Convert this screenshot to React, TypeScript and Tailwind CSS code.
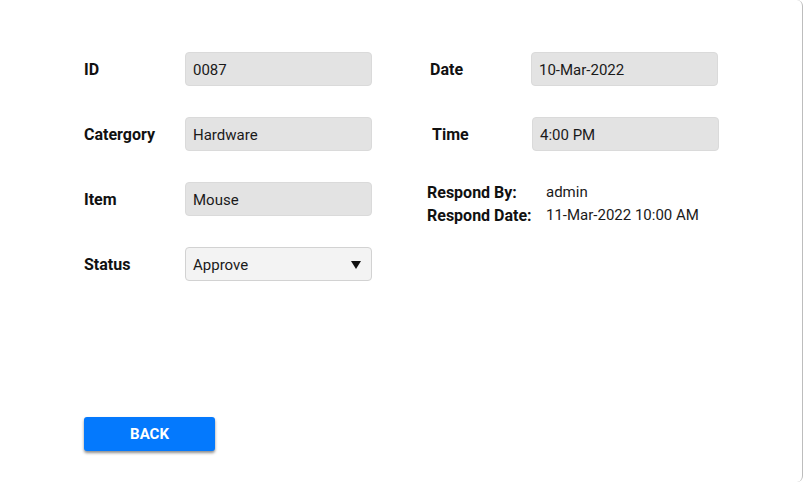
const Field = ({ value }: { value: string }) => (
  <div className="flex h-[34px] w-[187px] items-center rounded-[4px] border border-[#dadada] bg-[#e3e3e3] px-[7px] pt-[2px] text-[15px] text-[#1a1a1a]">
    {value}
  </div>
);

const Label = ({ text, className = "" }: { text: string; className?: string }) => (
  <div className={`pt-[2px] text-[16px] font-bold text-[#111] ${className}`}>{text}</div>
);

export default function App() {
  return (
    <div
      className="relative h-[482px] w-[803px] rounded-r-[6px] border-r border-[#bdbdbd] bg-white"
      style={{ fontFamily: "Roboto, 'Liberation Sans', sans-serif" }}
    >
      <div className="flex gap-[55px] pl-[84px] pt-[52px]">
        <div className="flex flex-col gap-[31px]">
          {[
            ["ID", "0087"],
            ["Catergory", "Hardware"],
            ["Item", "Mouse"],
          ].map(([label, value]) => (
            <div key={label} className="grid grid-cols-[101px_187px] items-center">
              <Label text={label} />
              <Field value={value} />
            </div>
          ))}
          <div className="grid grid-cols-[101px_187px] items-center">
            <Label text="Status" />
            <div className="flex h-[34px] w-[187px] items-center justify-between rounded-[4px] border border-[#d2d2d2] bg-[#f3f3f3] pl-[7px] pr-[10px] pt-[2px] text-[15px] text-[#1a1a1a]">
              <span>Approve</span>
              <svg width="10" height="8" viewBox="0 0 10 8">
                <path d="M0 0 H10 L5 8 Z" fill="#111" />
              </svg>
            </div>
          </div>
        </div>
        <div className="flex flex-col">
          <div className="grid grid-cols-[104px_187px] items-center">
            <Label text="Date" className="pl-[3px]" />
            <Field value="10-Mar-2022" />
          </div>
          <div className="mt-[31px] grid grid-cols-[105px_187px] items-center">
            <Label text="Time" className="pl-[5px]" />
            <Field value="4:00 PM" />
          </div>
          <div className="mt-[30px] grid grid-cols-[119px_1fr] leading-[23px]">
            <div className="text-[16px] font-bold text-[#111]">Respond By:</div>
            <div className="text-[15px] text-[#1a1a1a]">admin</div>
            <div className="text-[16px] font-bold text-[#111]">Respond Date:</div>
            <div className="text-[15px] text-[#1a1a1a]">11-Mar-2022 10:00 AM</div>
          </div>
        </div>
      </div>
      <div className="pl-[84px] pt-[136px]">
        <button className="h-[34px] w-[131px] rounded-[3px] bg-[#0479fd] pt-[1px] text-[15px] font-bold text-white shadow-[0_2px_3px_rgba(0,0,0,0.45)]">
          BACK
        </button>
      </div>
    </div>
  );
}
